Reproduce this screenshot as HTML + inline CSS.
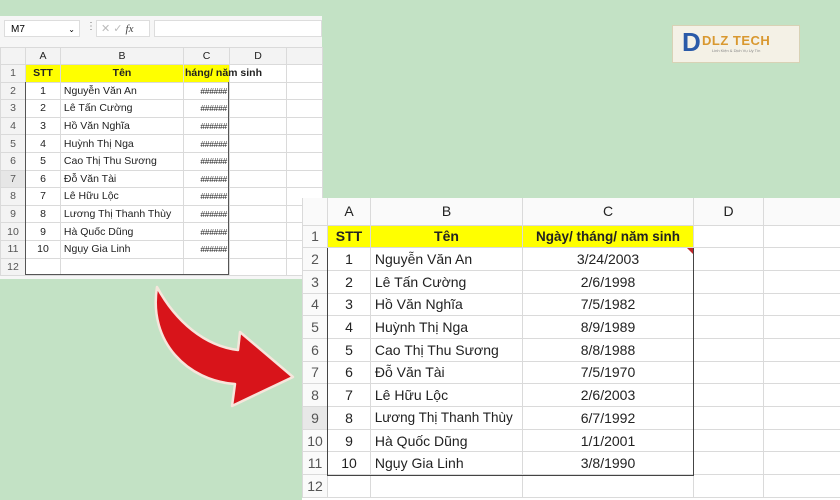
<!DOCTYPE html><html><head><style>
body{margin:0;width:840px;height:500px;background:#c3e2c5;position:relative;overflow:hidden;font-family:"Liberation Sans",sans-serif}
.a{position:absolute}
table{border-collapse:collapse;table-layout:fixed}
td{border:1px solid #dadada;padding:0;white-space:nowrap;overflow:hidden;color:#222}
td:first-child{text-align:center}
.h{font-size:8.5px;letter-spacing:-0.3px;text-align:right}
</style></head><body>
<!-- small sheet -->
<div class="a" style="left:0;top:16px;width:322px;height:263px;background:#f6f6f6">
 <div class="a" style="left:4px;top:4px;width:76px;height:17px;background:#fff;border:1px solid #ddd;font-size:10px;line-height:17px;padding-left:6px;box-sizing:border-box">M7<span style="float:right;margin-right:4px;font-size:8px">⌄</span></div>
 <div class="a" style="left:86px;top:5px;font-size:10px;color:#777">⋮</div>
 <div class="a" style="left:96px;top:4px;width:54px;height:17px;background:#fff;border:1px solid #ddd;font-size:11px;line-height:17px;color:#bbb;padding-left:4px;box-sizing:border-box">✕ ✓ <i style="color:#444;font-family:'Liberation Serif'">fx</i></div>
 <div class="a" style="left:154px;top:4px;width:168px;height:17px;background:#fff;border:1px solid #ddd;box-sizing:border-box"></div>
 <table class="a" style="left:0;top:31px;font-size:10.5px;background:#fff;width:322px">
  <colgroup><col style="width:25px"><col style="width:35px"><col style="width:123px"><col style="width:46px"><col style="width:57px"><col style="width:36px"></colgroup>
  <tr style="height:17px;background:#f3f3f3;color:#555;text-align:center"><td></td><td>A</td><td>B</td><td>C</td><td>D</td><td></td></tr>
  <tr style="height:17.6px"><td style="background:#f3f3f3;color:#555">1</td><td style="background:#ffff00;text-align:center;font-weight:bold">STT</td><td style="background:#ffff00;text-align:center;font-weight:bold">Tên</td><td style="background:#ffff00;font-weight:bold;overflow:visible;position:relative"><span style="position:absolute;left:1px;top:2px">háng/ năm sinh</span></td><td></td><td></td></tr>
  <tr style="height:17.6px"><td style="background:#f3f3f3;color:#555">2</td><td align=center>1</td><td>&nbsp;Nguyễn Văn An</td><td class="h">######&nbsp;</td><td></td><td></td></tr>
  <tr style="height:17.6px"><td style="background:#f3f3f3;color:#555">3</td><td align=center>2</td><td>&nbsp;Lê Tấn Cường</td><td class="h">######&nbsp;</td><td></td><td></td></tr>
  <tr style="height:17.6px"><td style="background:#f3f3f3;color:#555">4</td><td align=center>3</td><td>&nbsp;Hồ Văn Nghĩa</td><td class="h">######&nbsp;</td><td></td><td></td></tr>
  <tr style="height:17.6px"><td style="background:#f3f3f3;color:#555">5</td><td align=center>4</td><td>&nbsp;Huỳnh Thị Nga</td><td class="h">######&nbsp;</td><td></td><td></td></tr>
  <tr style="height:17.6px"><td style="background:#f3f3f3;color:#555">6</td><td align=center>5</td><td>&nbsp;Cao Thị Thu Sương</td><td class="h">######&nbsp;</td><td></td><td></td></tr>
  <tr style="height:17.6px"><td style="background:#e6e6e6;color:#555">7</td><td align=center>6</td><td>&nbsp;Đỗ Văn Tài</td><td class="h">######&nbsp;</td><td></td><td></td></tr>
  <tr style="height:17.6px"><td style="background:#f3f3f3;color:#555">8</td><td align=center>7</td><td>&nbsp;Lê Hữu Lộc</td><td class="h">######&nbsp;</td><td></td><td></td></tr>
  <tr style="height:17.6px"><td style="background:#f3f3f3;color:#555">9</td><td align=center>8</td><td>&nbsp;Lương Thị Thanh Thùy</td><td class="h">######&nbsp;</td><td></td><td></td></tr>
  <tr style="height:17.6px"><td style="background:#f3f3f3;color:#555">10</td><td align=center>9</td><td>&nbsp;Hà Quốc Dũng</td><td class="h">######&nbsp;</td><td></td><td></td></tr>
  <tr style="height:17.6px"><td style="background:#f3f3f3;color:#555">11</td><td align=center>10</td><td>&nbsp;Ngụy Gia Linh</td><td class="h">######&nbsp;</td><td></td><td></td></tr>
  <tr style="height:17.6px"><td style="background:#f3f3f3;color:#555">12</td><td></td><td></td><td></td><td></td><td></td></tr>
 </table>
 <div class="a" style="left:25px;top:66px;width:204px;height:193px;border:1px solid #555;border-top:none;box-sizing:border-box"></div>
</div>
<!-- logo -->
<div class="a" style="left:672px;top:25px;width:126px;height:36px;background:#f4f1e6;border:1px solid #d8d2b5"></div>
<div class="a" style="left:682px;top:27px;font:bold 26px 'Liberation Sans';color:#2a5aa8">D</div>
<div class="a" style="left:702px;top:33px;font:bold 13px 'Liberation Sans';color:#d9982f;letter-spacing:0.5px">DLZ TECH</div>
<div class="a" style="left:712px;top:48px;font-size:4px;color:#888">Linh Kiện &amp; Dịch Vụ Uy Tín</div>
<!-- arrow -->
<svg class="a" style="left:0;top:0" width="840" height="500"><path d="M157,287 C176,322 205,346 238,350 L240,332 L293,377 L232,406 L235,384 C188,381 148,342 157,287 Z" fill="#d8141a" stroke="#f6e6dc" stroke-width="2.5" stroke-linejoin="round"/></svg>
<!-- big sheet -->
<div class="a" style="left:302px;top:198px;width:538px;height:302px;background:#fff">
 <table class="a" style="left:0;top:0;font-size:14px;background:#fff;width:538px">
  <colgroup><col style="width:25px"><col style="width:43px"><col style="width:152px"><col style="width:171px"><col style="width:70px"><col style="width:77px"></colgroup>
  <tr style="height:27px;background:#fafafa;color:#555;text-align:center;font-size:14px"><td style="border-top:none"></td><td style="border-top:none">A</td><td style="border-top:none">B</td><td style="border-top:none">C</td><td style="border-top:none">D</td><td style="border-top:none"></td></tr>
  <tr style="height:22.7px"><td style="background:#fafafa;color:#555">1</td><td style="background:#ffff00;text-align:center;font-weight:bold">STT</td><td style="background:#ffff00;text-align:center;font-weight:bold">Tên</td><td style="background:#ffff00;font-weight:bold;text-align:center;font-size:13.5px">Ngày/ tháng/ năm sinh</td><td></td><td></td></tr>
  <tr style="height:22.7px"><td style="background:#fafafa;color:#555">2</td><td align=center>1</td><td>&nbsp;Nguyễn Văn An</td><td align=center>3/24/2003</td><td></td><td></td></tr>
  <tr style="height:22.7px"><td style="background:#fafafa;color:#555">3</td><td align=center>2</td><td>&nbsp;Lê Tấn Cường</td><td align=center>2/6/1998</td><td></td><td></td></tr>
  <tr style="height:22.7px"><td style="background:#fafafa;color:#555">4</td><td align=center>3</td><td>&nbsp;Hồ Văn Nghĩa</td><td align=center>7/5/1982</td><td></td><td></td></tr>
  <tr style="height:22.7px"><td style="background:#fafafa;color:#555">5</td><td align=center>4</td><td>&nbsp;Huỳnh Thị Nga</td><td align=center>8/9/1989</td><td></td><td></td></tr>
  <tr style="height:22.7px"><td style="background:#fafafa;color:#555">6</td><td align=center>5</td><td>&nbsp;Cao Thị Thu Sương</td><td align=center>8/8/1988</td><td></td><td></td></tr>
  <tr style="height:22.7px"><td style="background:#fafafa;color:#555">7</td><td align=center>6</td><td>&nbsp;Đỗ Văn Tài</td><td align=center>7/5/1970</td><td></td><td></td></tr>
  <tr style="height:22.7px"><td style="background:#fafafa;color:#555">8</td><td align=center>7</td><td>&nbsp;Lê Hữu Lộc</td><td align=center>2/6/2003</td><td></td><td></td></tr>
  <tr style="height:22.7px"><td style="background:#e8e8e8;color:#555">9</td><td align=center>8</td><td style="font-size:13.5px">&nbsp;Lương Thị Thanh Thùy</td><td align=center>6/7/1992</td><td></td><td></td></tr>
  <tr style="height:22.7px"><td style="background:#fafafa;color:#555">10</td><td align=center>9</td><td>&nbsp;Hà Quốc Dũng</td><td align=center>1/1/2001</td><td></td><td></td></tr>
  <tr style="height:22.7px"><td style="background:#fafafa;color:#555">11</td><td align=center>10</td><td>&nbsp;Ngụy Gia Linh</td><td align=center>3/8/1990</td><td></td><td></td></tr>
  <tr style="height:22.7px"><td style="background:#fafafa;color:#555">12</td><td></td><td></td><td></td><td></td><td></td></tr>
 </table>
 <div class="a" style="left:25px;top:50px;width:367px;height:228px;border:1.5px solid #444;border-top:none;box-sizing:border-box"></div>
 <div class="a" style="left:385px;top:50px;width:0;height:0;border-left:6px solid transparent;border-top:6px solid #c0262a"></div>
</div>
</body></html>
